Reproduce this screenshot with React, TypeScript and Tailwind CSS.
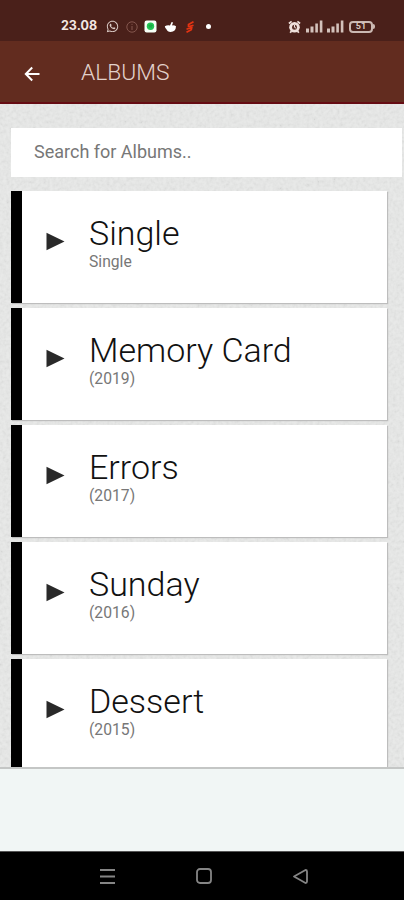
import { FaWhatsapp } from "react-icons/fa";

interface Album {
  title: string;
  subtitle: string;
}

const albums: Album[] = [
  { title: "Single", subtitle: "Single" },
  { title: "Memory Card", subtitle: "(2019)" },
  { title: "Errors", subtitle: "(2017)" },
  { title: "Sunday", subtitle: "(2016)" },
  { title: "Dessert", subtitle: "(2015)" },
];

function SignalIcon() {
  return (
    <svg width="17" height="13" viewBox="0 0 17 13" fill="#d3c1bb">
      <rect x="0" y="8.5" width="3" height="4" />
      <rect x="4.5" y="6.5" width="3" height="6" />
      <rect x="9.3" y="3.5" width="2.6" height="9" />
      <rect x="13.8" y="0.5" width="2.6" height="12" />
    </svg>
  );
}

function StatusBar() {
  return (
    <div className="flex h-[41px] items-center bg-[#4a201a] pt-3 pr-[29px] pl-[61px]">
      <span className="w-[45px] font-['Inter'] text-[12.5px] leading-none font-bold text-[#f3e7e3]">23.08</span>
      <FaWhatsapp size={13} color="#dccdc8" />
      {/* info */}
      <svg className="ml-[7px]" width="12" height="12" viewBox="0 0 12 12" fill="none" stroke="#84564e">
        <circle cx="6" cy="6" r="5.2" />
        <path d="M6 5v4M6 2.8v1.1" />
      </svg>
      <svg className="ml-[6px]" width="13" height="13" viewBox="0 0 13 13">
        <rect x="0.5" y="0.5" width="12" height="12" rx="2.2" fill="#f6fff6" />
        <circle cx="6.5" cy="6.3" r="3.7" fill="#22c653" />
        <path d="M4.6 5.4q2-.8 4 .1M4.9 7q1.6-.6 3.2.1" fill="none" stroke="#138e3b" strokeWidth="0.7" />
      </svg>
      <svg className="ml-[7px]" width="13" height="12" viewBox="0 0 13 12" fill="#fff">
        <path d="M.8 5.2Q3.4 3.9 6 4.5L7.6 1l1.5.6-1.2 2.8q2.6-.3 4.1.9-.1 5.5-5.5 5.6-3 0-4.2-2.9Q1.2 7.3.8 5.2Z" />
      </svg>
      <svg className="ml-[7px]" width="12" height="12" viewBox="0 0 12 12" fill="none" stroke="#e33312" strokeWidth="1.7">
        <path d="M9.5.7 4.5 3.6v1.9l3.3.8-.5 2.4-4.8 2.6M9.5 4.3 5 5.5M2.5 8.2l5-1.7" />
      </svg>
      <span className="ml-[10px] size-[5px] rounded-full bg-white" />
      <div className="ml-auto flex items-center">
        <svg className="mr-[5px]" width="13" height="14" viewBox="0 0 13 14">
          <circle cx="6.5" cy="7.2" r="5.3" fill="#f0e1dc" />
          <path d="m.9 3.5 2.7-2.1M12.1 3.5 9.4 1.4M3.5 11l-1.3 1.8M9.5 11l1.3 1.8" fill="none" stroke="#f0e1dc" strokeWidth="1.7" />
          <circle cx="6.5" cy="7.2" r="2.5" fill="#5c342d" />
          <path d="M6.5 5v2.3l1.7.9" fill="none" stroke="#f0e1dc" />
        </svg>
        <SignalIcon />
        <span className="w-1" />
        <SignalIcon />
        <div className="ml-[5px] flex h-[12px] w-[24px] items-center justify-center rounded-[4px] border-2 border-[#cbb8b2] font-['Roboto'] text-[9px] leading-none font-bold text-[#d8c6c0]">
          51
        </div>
        <span className="h-[5px] w-[2px] rounded-r-sm bg-[#cbb8b2]" />
      </div>
    </div>
  );
}

function Header() {
  return (
    <header className="flex h-[63px] items-center border-b-2 border-[#650c13] bg-[#622c1f] pt-[4px] pl-[24px]">
      <svg width="16" height="16" viewBox="0 0 16 16" fill="none" stroke="#fff" strokeWidth="2">
        <path d="M15.5 8h-13M8.2 1.5 1.8 8l6.4 6.5" />
      </svg>
      <h1 className="ml-[41px] text-[22.8px] leading-none font-[350] text-[#e2d2cc]">ALBUMS</h1>
    </header>
  );
}

function AlbumCard({ title, subtitle }: Album) {
  return (
    <li className="flex h-[112px] w-[376px] shrink-0 border-l-[11px] border-black bg-white shadow-[1px_1px_1px_#bdbdbd]">
      <svg className="mt-[41px] ml-[24px]" width="19" height="19" viewBox="0 0 19 19" fill="#292929">
        <path d="M.5.7v17.6l18-8.8z" />
      </svg>
      <div className="ml-[24px] pt-[23px]">
        <h2 className="text-[34px] leading-[38px] font-[350] whitespace-nowrap text-[#111]">{title}</h2>
        <p className="text-[15.7px] leading-[20px] text-[#777]">{subtitle}</p>
      </div>
    </li>
  );
}

export default function App() {
  return (
    <div className="flex h-[900px] w-[404px] flex-col overflow-hidden font-['Roboto',sans-serif]">
      <StatusBar />
      <Header />
      <main className="relative h-[663px] overflow-hidden bg-[#e7e8e7]">
        {/* paper grain */}
        <svg className="absolute inset-0 size-full opacity-[0.07]" aria-hidden="true">
          <filter id="grain">
            <feTurbulence type="fractalNoise" baseFrequency="0.3" numOctaves="2" seed="4" />
            <feColorMatrix type="matrix" values="1.6 0 0 0 -.2  1.6 0 0 0 -.2  1.6 0 0 0 -.2  0 0 0 0 1" />
          </filter>
          <rect width="100%" height="100%" filter="url(#grain)" />
        </svg>
        <div className="relative pt-[24px] pl-[11px]">
          <input
            className="block h-[49px] w-[391px] bg-white px-[23px] pb-[2px] text-[18px] text-[#777] outline-none placeholder:text-[#777]"
            placeholder="Search for Albums.."
          />
          <ul className="mt-[14px] flex flex-col gap-[5px]">
            {albums.map((album) => (
              <AlbumCard key={album.title} {...album} />
            ))}
          </ul>
        </div>
      </main>
      {/* ad slot */}
      <div className="h-[84px] border-t-2 border-[#c4c6c5] bg-[#f1f6f5]" />
      <nav className="flex h-[49px] items-center border-t border-[#555] bg-black pl-[100px]">
        <svg width="15" height="15" viewBox="0 0 15 15" stroke="#858585" strokeWidth="1.8">
          <path d="M0 1h15M0 7.5h15M0 14h15" />
        </svg>
        <svg className="ml-[81px]" width="16" height="16" viewBox="0 0 16 16" fill="none" stroke="#858585" strokeWidth="1.8">
          <rect x="1" y="1" width="14" height="14" rx="3" />
        </svg>
        <svg className="ml-[81px]" width="15" height="15" viewBox="0 0 15 15" fill="none" stroke="#858585" strokeWidth="1.8" strokeLinejoin="round">
          <path d="M1 7.5 12.5 1Q14 1 14 2.5v10q0 1.5-1.5 1.5Z" />
        </svg>
      </nav>
    </div>
  );
}
